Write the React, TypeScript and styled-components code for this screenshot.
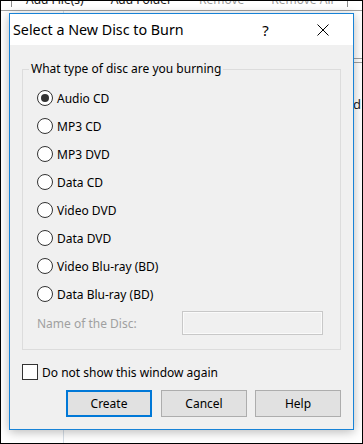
import React, { useState } from "react";
import styled, { createGlobalStyle } from "styled-components";

const GlobalStyle = createGlobalStyle`
    html, body {
        margin: 0;
        padding: 0;
        background: #ffffff;
    }
    body {
        font-family: "Noto Sans", "Liberation Sans", sans-serif;
    }
`;

const discTypes = [
    "Audio CD",
    "MP3 CD",
    "MP3 DVD",
    "Data CD",
    "Video DVD",
    "Data DVD",
    "Video Blu-ray (BD)",
    "Data Blu-ray (BD)",
];

const App = () => {
    const [disc, setDisc] = useState(discTypes[0]);
    const [dontShow, setDontShow] = useState(false);

    return (
        <>
            <GlobalStyle />
            <Screen>
                <Toolbar>
                    <ToolSep />
                    <ToolButton>Add File(s)</ToolButton>
                    <ToolButton>Add Folder</ToolButton>
                    <ToolButton disabled>Remove</ToolButton>
                    <ToolButton disabled>Remove All</ToolButton>
                    <ToolSep />
                </Toolbar>
                <Workspace>
                    <SideColumn />
                    <MainColumn>
                        <ListHeader />
                        <ListRow>Speed</ListRow>
                    </MainColumn>
                </Workspace>

                <Dialog>
                    <TitleBar>
                        <Title>Select a New Disc to Burn</Title>
                        <CaptionButton>?</CaptionButton>
                        <CaptionButton>
                            <svg width="12" height="12" viewBox="0 0 12 12">
                                <path
                                    d="M0.5 0.5 L11.5 11.5 M11.5 0.5 L0.5 11.5"
                                    stroke="#000"
                                    strokeWidth="1"
                                />
                            </svg>
                        </CaptionButton>
                    </TitleBar>

                    <DialogBody>
                        <GroupBox>
                            <Legend>What type of disc are you burning</Legend>
                            <GroupInner>
                                {discTypes.map((d) => (
                                    <RadioRow key={d} onClick={() => setDisc(d)}>
                                        <RadioCircle checked={disc === d} />
                                        {d}
                                    </RadioRow>
                                ))}
                                <NameRow>
                                    <DisabledLabel>Name of the Disc:</DisabledLabel>
                                    <NameInput disabled />
                                </NameRow>
                            </GroupInner>
                        </GroupBox>

                        <CheckRow onClick={() => setDontShow(!dontShow)}>
                            <CheckBox checked={dontShow}>{dontShow ? "✓" : ""}</CheckBox>
                            Do not show this window again
                        </CheckRow>

                        <ButtonRow>
                            <DialogButton isDefault>Create</DialogButton>
                            <DialogButton>Cancel</DialogButton>
                            <DialogButton>Help</DialogButton>
                        </ButtonRow>
                    </DialogBody>
                </Dialog>
            </Screen>
        </>
    );
};

const Screen = styled.div`
    width: 363px;
    height: 444px;
    box-sizing: border-box;
    border: 1px solid #000;
    position: relative;
    overflow: hidden;
    background: #ffffff;
    display: flex;
    flex-direction: column;
    font-size: 12px;
    color: #000;
`;

const Toolbar = styled.div`
    height: 9px;
    flex-shrink: 0;
    display: flex;
    align-items: flex-start;
    overflow: hidden;
    border-bottom: 1px solid #a0a0a0;
    padding-left: 10px;
`;

const ToolSep = styled.div`
    width: 1px;
    height: 6px;
    background: #8c8c8c;
`;

const ToolButton = styled.div<{ disabled?: boolean }>`
    padding: 0 13px 0 14px;
    line-height: 14px;
    margin-top: -8px;
    white-space: nowrap;
    color: ${({ disabled }) => (disabled ? "#9a9a9a" : "#1a1a1a")};
`;

const Workspace = styled.div`
    flex: 1;
    display: flex;
`;

const SideColumn = styled.div`
    width: 62px;
    border-right: 1px solid #d6dfe8;
`;

const MainColumn = styled.div`
    flex: 1;
    display: flex;
    flex-direction: column;
`;

const ListHeader = styled.div`
    margin-top: 47px;
    height: 3px;
    border-top: 1px solid #a0a0a0;
    border-bottom: 1px solid #a0a0a0;
`;

const ListRow = styled.div`
    margin-top: 32px;
    display: flex;
    justify-content: flex-end;
    padding-right: 1px;
    font-size: 13px;
    color: #222;
`;

const Dialog = styled.div`
    position: absolute;
    left: 8px;
    top: 12px;
    width: 345px;
    height: 417px;
    box-sizing: border-box;
    border: 1px solid #1883d7;
    box-shadow: 0 2px 10px rgba(0, 0, 0, 0.28);
    display: flex;
    flex-direction: column;
    background: #f0f0f0;
`;

const TitleBar = styled.div`
    height: 31px;
    flex-shrink: 0;
    background: #ffffff;
    display: flex;
    align-items: center;
    padding-right: 2px;
`;

const Title = styled.div`
    flex: 1;
    padding-left: 3px;
    font-size: 14.3px;
    color: #000;
    white-space: nowrap;
`;

const CaptionButton = styled.div`
    width: 57px;
    height: 31px;
    display: flex;
    align-items: center;
    justify-content: center;
    font-size: 15px;
    color: #000;
`;

const DialogBody = styled.div`
    flex: 1;
    display: flex;
    flex-direction: column;
    padding: 0 12px;
`;

const GroupBox = styled.fieldset`
    margin: 17px 0 0;
    padding: 0;
    border: 1px solid #dcdcdc;
    min-width: 0;
`;

const Legend = styled.legend`
    margin-left: 6px;
    padding: 0 2px;
    font-size: 12px;
    line-height: 14px;
    color: #000;
`;

const GroupInner = styled.div`
    padding: 8px 17px 14px 14px;
    display: flex;
    flex-direction: column;
`;

const RadioRow = styled.label`
    height: 28px;
    display: flex;
    align-items: center;
    gap: 4px;
    cursor: default;
`;

const RadioCircle = styled.span<{ checked: boolean }>`
    width: 16px;
    height: 16px;
    box-sizing: border-box;
    border-radius: 50%;
    border: 1px solid #333333;
    background: #ffffff;
    display: flex;
    align-items: center;
    justify-content: center;

    &::after {
        content: "";
        width: 8px;
        height: 8px;
        border-radius: 50%;
        background: #333333;
        display: ${({ checked }) => (checked ? "block" : "none")};
    }
`;

const NameRow = styled.div`
    margin-top: 3px;
    height: 24px;
    display: flex;
    align-items: center;
    justify-content: space-between;
`;

const DisabledLabel = styled.span`
    color: #a0a0a0;
`;

const NameInput = styled.input`
    width: 141px;
    height: 24px;
    box-sizing: border-box;
    border: 1px solid #c8c8c8;
    box-shadow: inset 0 0 0 1px #fafafa;
    background: #f0f0f0;
    margin: 0;
`;

const CheckRow = styled.label`
    margin-top: 14px;
    height: 16px;
    display: flex;
    align-items: center;
    gap: 4px;
`;

const CheckBox = styled.span<{ checked: boolean }>`
    width: 16px;
    height: 16px;
    box-sizing: border-box;
    border: 1px solid #333333;
    background: #ffffff;
    font-size: 11px;
    line-height: 14px;
    text-align: center;
`;

const ButtonRow = styled.div`
    margin-top: 10px;
    display: flex;
    justify-content: flex-end;
    gap: 8px;
`;

const DialogButton = styled.button<{ isDefault?: boolean }>`
    width: 86px;
    height: 27px;
    box-sizing: border-box;
    margin: 0;
    margin-right: ${({ isDefault }) => (isDefault ? "1px" : "0")};
    border: ${({ isDefault }) => (isDefault ? "2px solid #0078d7" : "1px solid #adadad")};
    background: #e1e1e1;
    font-family: inherit;
    font-size: 12px;
    color: #000;
    padding: 0;
`;

export default App;
